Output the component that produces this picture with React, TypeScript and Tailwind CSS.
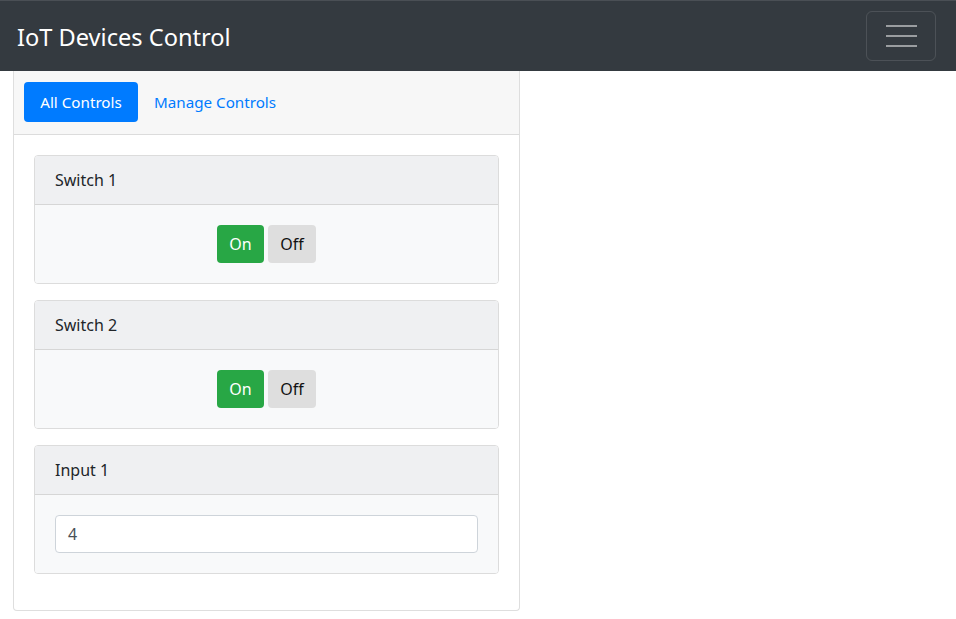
import React from "react";

function SwitchCard({ title }: { title: string }) {
  return (
    <div className="rounded border border-[#dcdcdc] overflow-hidden">
      <div className="h-[49px] flex items-center px-5 bg-[#eff0f2] border-b border-[#d6d6d6] text-[16px] text-[#212529]">
        {title}
      </div>
      <div className="h-[78px] bg-[#f8f9fa] flex items-center justify-center gap-1">
        <button className="w-[47px] h-[38px] rounded bg-[#28a745] text-white text-[16px]">On</button>
        <button className="w-[48px] h-[38px] rounded bg-[#dedede] text-[#111] text-[16px]">Off</button>
      </div>
    </div>
  );
}

export default function App() {
  return (
    <div className="w-[956px] h-[619px] bg-white relative overflow-hidden" style={{ fontFamily: '"Noto Sans", "Open Sans", sans-serif' }}>
      <nav className="h-[71px] bg-[#343a40] flex items-center justify-between pl-[17px] pr-5 border-t border-[#4a4f55]">
        <span className="text-white text-[23.6px] leading-none pt-[3px]">IoT Devices Control</span>
        <button className="w-[70px] h-[50px] rounded-md border border-[rgba(255,255,255,0.12)] flex flex-col items-center justify-center gap-[8px]">
          <span className="block w-[31px] h-[2px] bg-[#9a9da0]"></span>
          <span className="block w-[31px] h-[2px] bg-[#9a9da0]"></span>
          <span className="block w-[31px] h-[2px] bg-[#9a9da0]"></span>
        </button>
      </nav>
      <div className="ml-[13px] w-[507px] h-[540px] border border-t-0 border-[#dedede] rounded-b">
        <div className="h-[64px] bg-[#f7f7f7] border-b border-[#dcdcdc] flex items-start pt-[11px] pl-[10px] gap-4">
          <button className="h-[40px] w-[114px] rounded bg-[#007bff] text-white text-[15.2px]">All Controls</button>
          <span className="h-[40px] flex items-center text-[#007bff] text-[15.2px]">Manage Controls</span>
        </div>
        <div className="px-5 pt-5 flex flex-col gap-4">
          <SwitchCard title="Switch 1" />
          <SwitchCard title="Switch 2" />
          <div className="rounded border border-[#dcdcdc] overflow-hidden">
            <div className="h-[49px] flex items-center px-5 bg-[#eff0f2] border-b border-[#d6d6d6] text-[16px] text-[#212529]">
              Input 1
            </div>
            <div className="h-[78px] bg-[#f8f9fa] flex items-center px-5">
              <div className="w-full h-[38px] bg-white border border-[#ced4da] rounded flex items-center px-3 text-[16px] text-[#495057]">
                4
              </div>
            </div>
          </div>
        </div>
      </div>
    </div>
  );
}
